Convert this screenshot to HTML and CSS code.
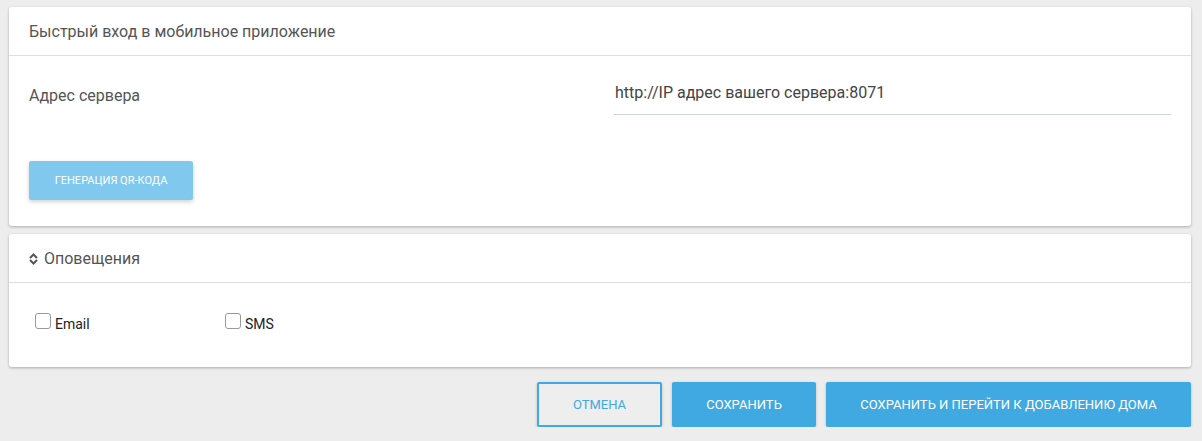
FILE: index.html
```html
<!DOCTYPE html>
<html lang="ru">
<head>
<meta charset="utf-8">
<title>Настройки</title>
<link rel="stylesheet" href="styles.css">
</head>
<body>
<div class="page">
  <section class="card">
    <div class="card-header">Быстрый вход в мобильное приложение</div>
    <div class="card-body card-body-qr">
      <div class="form-row">
        <div class="form-label">Адрес сервера</div>
        <div class="form-input">http://IP адрес вашего сервера:8071</div>
      </div>
      <button class="btn-qr">ГЕНЕРАЦИЯ QR-КОДА</button>
    </div>
  </section>
  <section class="card">
    <div class="card-header">
      <svg class="sort-icon" width="9" height="12" viewBox="0 0 9 12"><path d="M1 5 L4.5 1.5 L8 5" fill="none" stroke="#555" stroke-width="2"/><path d="M1 7 L4.5 10.5 L8 7" fill="none" stroke="#555" stroke-width="2"/></svg>
      <span>Оповещения</span>
    </div>
    <div class="card-body card-body-notify">
      <label class="check"><span class="box"></span>Email</label>
      <label class="check"><span class="box"></span>SMS</label>
    </div>
  </section>
  <div class="actions">
    <button class="btn btn-outline">ОТМЕНА</button>
    <button class="btn btn-primary btn-save">СОХРАНИТЬ</button>
    <button class="btn btn-primary btn-save-next">СОХРАНИТЬ И ПЕРЕЙТИ К ДОБАВЛЕНИЮ ДОМА</button>
  </div>
</div>
</body>
</html>
```
FILE: styles.css
```css
html, body {
  margin: 0;
  padding: 0;
  background: #ededed;
  font-family: Roboto, "Liberation Sans", sans-serif;
}
.page {
  padding: 7px 11px 0 9px;
  display: flex;
  flex-direction: column;
  gap: 8px;
}
.card {
  background: #fff;
  border-radius: 3px;
  box-shadow: 0 1px 3px rgba(0,0,0,0.28);
}
.card-header {
  height: 48px;
  border-bottom: 1px solid #dedede;
  padding: 0 20px;
  display: flex;
  align-items: center;
  gap: 6px;
  font-size: 16px;
  color: #555;
}
.sort-icon { display: block; margin-top: 1px; }
.card-body { padding: 0 20px; }
.card-body-qr { padding-top: 20px; padding-bottom: 26px; }
.form-row {
  display: grid;
  grid-template-columns: 1fr 1fr;
  column-gap: 28px;
}
.form-label {
  font-size: 16px;
  color: #555;
  padding-top: 8px;
  line-height: 24px;
}
.form-input {
  font-size: 16px;
  color: #444;
  line-height: 34px;
  padding-bottom: 4px;
  border-bottom: 1px solid #cfd4d8;
  padding-left: 1px;
}
.btn-qr {
  margin-top: 46px;
  width: 164px;
  height: 39px;
  border: none;
  border-radius: 2px;
  background: #81c8ee;
  color: #fff;
  font-family: Roboto, "Liberation Sans", sans-serif;
  font-size: 11px;
  box-shadow: 0 2px 4px rgba(0,0,0,0.18);
  padding: 0;
}
.card-body-notify {
  display: flex;
  padding: 31px 26px 33px;
}
.check {
  width: 190px;
  display: flex;
  align-items: flex-start;
  font-size: 14px;
  color: #222;
  line-height: 20px;
}
.box {
  width: 14px;
  height: 14px;
  border: 1px solid #999;
  border-radius: 3px;
  margin-right: 4px;
  margin-top: -1px;
  background: #fff;
}
.actions {
  display: flex;
  justify-content: flex-end;
  gap: 10px;
  margin-top: 7px;
}
.btn {
  height: 45px;
  border-radius: 2px;
  font-family: Roboto, "Liberation Sans", sans-serif;
  font-size: 13px;
  padding: 0;
  box-shadow: 0 1px 3px rgba(0,0,0,0.22);
}
.btn-outline {
  width: 125px;
  background: #eeeeee;
  border: 2px solid #41a9e1;
  color: #41a9e1;
}
.btn-primary {
  background: #41a9e1;
  border: none;
  color: #fff;
}
.btn-save { width: 144px; }
.btn-save-next { width: 365px; }
```
